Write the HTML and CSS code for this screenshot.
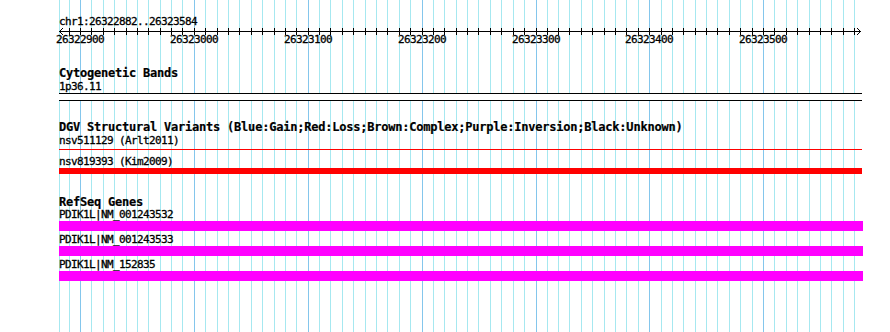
FILE: index.html
```html
<!DOCTYPE html>
<html>
<head>
<meta charset="utf-8">
<title>GBrowse</title>
<link rel="stylesheet" href="styles.css">
</head>
<body>
<div class="panel">
  <svg class="grid" width="890" height="332" viewBox="0 0 890 332">
    <path class="minor" d="M59.5 0V332M69.5 0V332M91.5 0V332M103.5 0V332M114.5 0V332M126.5 0V332M137.5 0V332M148.5 0V332M160.5 0V332M171.5 0V332M182.5 0V332M205.5 0V332M217.5 0V332M228.5 0V332M239.5 0V332M251.5 0V332M262.5 0V332M274.5 0V332M285.5 0V332M296.5 0V332M319.5 0V332M330.5 0V332M342.5 0V332M353.5 0V332M365.5 0V332M376.5 0V332M387.5 0V332M399.5 0V332M410.5 0V332M433.5 0V332M444.5 0V332M456.5 0V332M467.5 0V332M478.5 0V332M490.5 0V332M501.5 0V332M513.5 0V332M524.5 0V332M547.5 0V332M558.5 0V332M569.5 0V332M581.5 0V332M592.5 0V332M604.5 0V332M615.5 0V332M626.5 0V332M638.5 0V332M661.5 0V332M672.5 0V332M683.5 0V332M695.5 0V332M706.5 0V332M717.5 0V332M729.5 0V332M740.5 0V332M752.5 0V332M774.5 0V332M786.5 0V332M797.5 0V332M809.5 0V332M820.5 0V332M831.5 0V332M843.5 0V332M854.5 0V332"/>
    <path class="major" d="M80.5 0V332M194.5 0V332M308.5 0V332M422.5 0V332M536.5 0V332M649.5 0V332M763.5 0V332"/>
  </svg>
  <div class="tracks">
    <div class="segment">chr1:26322882..26323584</div>
    <svg class="ruler" width="890" height="16" viewBox="0 28 890 16">
      <path class="axis" d="M59 31.5H861"/>
      <path class="ticks" d="M69.5 28V35M80.5 28V35M91.5 28V35M103.5 28V35M114.5 28V35M126.5 28V35M137.5 28V35M148.5 28V35M160.5 28V35M171.5 28V35M182.5 28V35M194.5 28V35M205.5 28V35M217.5 28V35M228.5 28V35M239.5 28V35M251.5 28V35M262.5 28V35M274.5 28V35M285.5 28V35M296.5 28V35M308.5 28V35M319.5 28V35M330.5 28V35M342.5 28V35M353.5 28V35M365.5 28V35M376.5 28V35M387.5 28V35M399.5 28V35M410.5 28V35M422.5 28V35M433.5 28V35M444.5 28V35M456.5 28V35M467.5 28V35M478.5 28V35M490.5 28V35M501.5 28V35M513.5 28V35M524.5 28V35M536.5 28V35M547.5 28V35M558.5 28V35M569.5 28V35M581.5 28V35M592.5 28V35M604.5 28V35M615.5 28V35M626.5 28V35M638.5 28V35M649.5 28V35M661.5 28V35M672.5 28V35M683.5 28V35M695.5 28V35M706.5 28V35M717.5 28V35M729.5 28V35M740.5 28V35M752.5 28V35M763.5 28V35M774.5 28V35M786.5 28V35M797.5 28V35M809.5 28V35M820.5 28V35M831.5 28V35M843.5 28V35M854.5 28V35"/>
      <path class="arrow" d="M63 28L59.5 31.5L63 35M857 28L860.5 31.5L857 35"/>
      <g class="ruler-labels">
        <text x="80" y="43">26322900</text>
        <text x="194" y="43">26323000</text>
        <text x="308" y="43">26323100</text>
        <text x="422" y="43">26323200</text>
        <text x="536" y="43">26323300</text>
        <text x="649" y="43">26323400</text>
        <text x="763" y="43">26323500</text>
      </g>
    </svg>

    <section class="track track-cyto">
      <div class="track-title">Cytogenetic Bands</div>
      <div class="feature-label">1p36.11</div>
      <div class="band"></div>
    </section>

    <section class="track track-dgv">
      <div class="track-title">DGV Structural Variants (Blue:Gain;Red:Loss;Brown:Complex;Purple:Inversion;Black:Unknown)</div>
      <div class="feature-label">nsv511129 (Arlt2011)</div>
      <div class="variant-line"></div>
      <div class="feature-label gap5">nsv819393 (Kim2009)</div>
      <div class="variant-bar"></div>
    </section>

    <section class="track track-genes">
      <div class="track-title short">RefSeq Genes</div>
      <div class="gene">
        <div class="feature-label">PDIK1L|NM_001243532</div>
        <div class="gene-bar"></div>
      </div>
      <div class="gene">
        <div class="feature-label">PDIK1L|NM_001243533</div>
        <div class="gene-bar"></div>
      </div>
      <div class="gene">
        <div class="feature-label">PDIK1L|NM_152835</div>
        <div class="gene-bar"></div>
      </div>
    </section>
  </div>
</div>
</body>
</html>
```
FILE: styles.css
```css
html, body {
  margin: 0;
  padding: 0;
  background: #ffffff;
}

body {
  font-family: "DejaVu Sans Mono", "Liberation Mono", monospace;
  color: #000000;
}

.panel {
  position: relative;
  width: 890px;
  height: 332px;
  overflow: hidden;
}

.grid {
  position: absolute;
  left: 0;
  top: 0;
  display: block;
}

.grid .minor {
  stroke: #a6e8f0;
  stroke-width: 1;
  fill: none;
  shape-rendering: crispEdges;
}

.grid .major {
  stroke: #84c6ec;
  stroke-width: 1;
  fill: none;
  shape-rendering: crispEdges;
}

.tracks {
  position: relative;
  padding-left: 59px;
  width: 803px;
}

.segment {
  margin-top: 15px;
  height: 13px;
  font-size: 11px;
  letter-spacing: -0.62px;
  line-height: 13px;
  white-space: nowrap;
  -webkit-text-stroke: 0.3px #000000;
}

.ruler {
  display: block;
  margin-left: -59px;
  overflow: visible;
}

.ruler .axis,
.ruler .ticks {
  stroke: #000000;
  stroke-width: 1;
  fill: none;
  shape-rendering: crispEdges;
}

.ruler .arrow {
  stroke: #000000;
  stroke-width: 1;
  fill: none;
}

.ruler-labels text {
  font-family: "DejaVu Sans Mono", "Liberation Mono", monospace;
  font-size: 11px;
  letter-spacing: -0.62px;
  text-anchor: middle;
  fill: #000000;
  stroke: #000000;
  stroke-width: 0.3px;
}

.track-title {
  height: 13px;
  font-size: 12px;
  letter-spacing: -0.22px;
  font-weight: bold;
  line-height: 13px;
  white-space: nowrap;
  -webkit-text-stroke: 0.2px #000000;
}

.track-title.short {
  height: 12px;
}

.feature-label {
  height: 13px;
  font-size: 11px;
  letter-spacing: -0.62px;
  line-height: 13px;
  white-space: nowrap;
  -webkit-text-stroke: 0.3px #000000;
}

.feature-label.gap5 {
  margin-top: 5px;
}

.track-cyto {
  margin-top: 23px;
}

.band {
  box-sizing: border-box;
  width: 803px;
  height: 8px;
  border-top: 1px solid #000000;
  border-bottom: 1px solid #000000;
  background: #ffffff;
}

.track-dgv {
  margin-top: 20px;
}

.variant-line {
  margin-top: 2px;
  width: 803px;
  height: 1px;
  background: #ff0000;
}

.variant-bar {
  width: 803px;
  height: 6px;
  background: #ff0000;
}

.track-genes {
  margin-top: 22px;
}

.gene + .gene {
  margin-top: 2px;
}

.gene-bar {
  width: 804px;
  height: 10px;
  background: #ff00ff;
}
```
